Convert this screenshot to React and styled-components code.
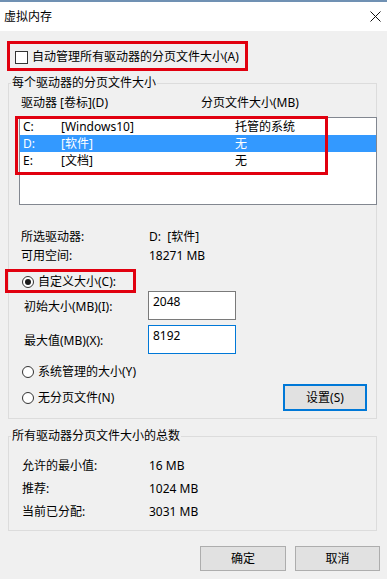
import React from 'react';
import styled, { createGlobalStyle } from 'styled-components';

const GlobalStyle = createGlobalStyle`
  html, body {
    margin: 0;
    padding: 0;
    background: #f0f0f0;
  }
  body {
    font-family: "Noto Sans", "Noto Sans CJK SC", sans-serif;
    font-size: 12px;
    color: #000;
  }
`;

const Window = styled.div`
  width: 387px;
  height: 579px;
  background: #f0f0f0;
  display: flex;
  flex-direction: column;
  overflow: hidden;
`;

const TitleBar = styled.div`
  height: 29px;
  border-top: 2px solid #7091b3;
  background: #fff;
  display: flex;
  align-items: center;
  justify-content: space-between;
  padding: 0 6px 0 4px;
  line-height: 14px;
`;

const Body = styled.div`
  display: flex;
  flex-direction: column;
  padding: 0 10px 0 8px;
`;

const Annotation = styled.div`
  position: absolute;
  top: ${({ $top }) => $top}px;
  left: ${({ $left }) => $left}px;
  width: ${({ $width }) => $width}px;
  height: ${({ $height }) => $height}px;
  border: 3px solid #e1000f;
  box-sizing: border-box;
  pointer-events: none;
`;

const AutoBox = styled.div`
  margin: 10px 0 0 -1px;
  width: 241px;
  height: 30px;
  box-sizing: border-box;
  border: 3px solid #e1000f;
  display: flex;
  align-items: center;
  gap: 4px;
  padding: 2px 0 0 5px;
  line-height: 14px;
`;

const CheckBox = styled.span`
  width: 13px;
  height: 13px;
  box-sizing: border-box;
  border: 1px solid #333;
  background: #fff;
`;

const Group = styled.fieldset`
  margin: ${({ $gap }) => $gap}px 0 0 0;
  padding: 0;
  border: 1px solid #dcdcdc;
  min-width: 0;
`;

const Legend = styled.legend`
  margin-left: 2px;
  padding: 0 1px;
  line-height: 14px;
`;

const GroupInner = styled.div`
  display: flex;
  flex-direction: column;
  padding: ${({ $pad }) => $pad};
`;

const HeaderRow = styled.div`
  display: flex;
  line-height: 14px;
  padding-left: 2px;
`;

const HeaderCell = styled.span`
  width: ${({ $w }) => $w || 'auto'};
`;

const ListWrap = styled.div`
  position: relative;
  margin-top: 7px;
`;

const ListBox = styled.div`
  height: 88px;
  box-sizing: border-box;
  border: 1px solid #828790;
  background: #fff;
  margin-right: -1px;
`;

const ListRow = styled.div`
  display: flex;
  height: 17px;
  line-height: 17px;
  background: ${({ $selected }) => ($selected ? '#3399ff' : 'transparent')};
  color: ${({ $selected }) => ($selected ? '#fff' : '#000')};
`;

const Cell = styled.span`
  width: ${({ $w }) => $w || 'auto'};
  padding-left: ${({ $pl }) => $pl || 0}px;
  box-sizing: border-box;
  white-space: nowrap;
`;

const InfoBlock = styled.div`
  margin-top: 22px;
  display: flex;
  flex-direction: column;
`;

const InfoRow = styled.div`
  display: flex;
  height: ${({ $h }) => $h}px;
  line-height: ${({ $h }) => $h}px;
  padding-left: ${({ $pl }) => $pl}px;
`;

const InfoLabel = styled.span`
  width: ${({ $w }) => $w}px;
`;

const RadioRow = styled.div`
  position: relative;
  display: flex;
  align-items: center;
  gap: 4px;
  height: 16px;
  line-height: 14px;
  padding-left: 3px;
  margin-top: ${({ $mt }) => $mt || 0}px;
`;

const Radio = styled.span`
  width: 12px;
  height: 12px;
  box-sizing: border-box;
  border: 1px solid #333;
  border-radius: 50%;
  background: #fff;
  display: flex;
  align-items: center;
  justify-content: center;
  &::after {
    content: '';
    width: 6px;
    height: 6px;
    border-radius: 50%;
    background: ${({ $checked }) => ($checked ? '#1a1a1a' : 'transparent')};
  }
`;

const FieldRow = styled.div`
  display: flex;
  align-items: center;
  height: 29px;
  margin-top: ${({ $mt }) => $mt}px;
`;

const FieldLabel = styled.span`
  width: 129px;
  padding: 3px 0 0 5px;
  box-sizing: border-box;
  line-height: 14px;
`;

const TextBox = styled.div`
  width: 88px;
  height: 29px;
  box-sizing: border-box;
  border: 1px solid ${({ $focused }) => ($focused ? '#0078d7' : '#7a7a7a')};
  background: #fff;
  padding: 3px 4px 0;
  line-height: 14px;
`;

const BottomRow = styled.div`
  display: flex;
  align-items: center;
  justify-content: space-between;
  margin-top: 4px;
  padding-right: 9px;
`;

const Button = styled.div`
  width: ${({ $w }) => $w}px;
  height: ${({ $h }) => $h}px;
  box-sizing: border-box;
  border: ${({ $default }) => ($default ? '2px solid #0078d7' : '1px solid #adadad')};
  background: #e1e1e1;
  display: flex;
  align-items: center;
  justify-content: center;
  line-height: 14px;
`;

const Footer = styled.div`
  display: flex;
  justify-content: flex-end;
  gap: 9px;
  margin: 15px -3px 0 0;
`;

const CloseIcon = () => (
  <svg width="11" height="11" viewBox="0 0 11 11">
    <path d="M0.5 0.5 L10.5 10.5 M10.5 0.5 L0.5 10.5" stroke="#111" strokeWidth="1" fill="none" />
  </svg>
);

const drives = [
  { drive: 'C:', label: '[Windows10]', size: '托管的系统' },
  { drive: 'D:', label: '[软件]', size: '无', selected: true },
  { drive: 'E:', label: '[文档]', size: '无' },
];

const totals = [
  ['允许的最小值:', '16 MB'],
  ['推荐:', '1024 MB'],
  ['当前已分配:', '3031 MB'],
];

export default function App() {
  return (
    <>
      <GlobalStyle />
      <Window>
        <TitleBar>
          <span>虚拟内存</span>
          <CloseIcon />
        </TitleBar>
        <Body>
          <AutoBox>
            <CheckBox />
            <span>自动管理所有驱动器的分页文件大小(A)</span>
          </AutoBox>

          <Group $gap={5}>
            <Legend>每个驱动器的分页文件大小</Legend>
            <GroupInner $pad="6px 0 7px 10px">
              <HeaderRow>
                <HeaderCell $w="180px">驱动器 [卷标](D)</HeaderCell>
                <HeaderCell>分页文件大小(MB)</HeaderCell>
              </HeaderRow>
              <ListWrap>
                <ListBox>
                  {drives.map((d) => (
                    <ListRow key={d.drive} $selected={d.selected}>
                      <Cell $w="41px" $pl={3}>{d.drive}</Cell>
                      <Cell $w="174px">{d.label}</Cell>
                      <Cell>{d.size}</Cell>
                    </ListRow>
                  ))}
                </ListBox>
                <Annotation $top={-1} $left={-4} $width={313} $height={59} />
              </ListWrap>

              <InfoBlock>
                <InfoRow $h={19} $pl={2}>
                  <InfoLabel $w={128}>所选驱动器:</InfoLabel>
                  <span>D:&nbsp;&nbsp;[软件]</span>
                </InfoRow>
                <InfoRow $h={19} $pl={2}>
                  <InfoLabel $w={128}>可用空间:</InfoLabel>
                  <span>18271 MB</span>
                </InfoRow>
              </InfoBlock>

              <RadioRow $mt={9}>
                <Radio $checked />
                <span>自定义大小(C):</span>
                <Annotation $top={-5} $left={-14} $width={131} $height={24} />
              </RadioRow>
              <FieldRow $mt={1}>
                <FieldLabel>初始大小(MB)(I):</FieldLabel>
                <TextBox>2048</TextBox>
              </FieldRow>
              <FieldRow $mt={5}>
                <FieldLabel>最大值(MB)(X):</FieldLabel>
                <TextBox $focused>8192</TextBox>
              </FieldRow>
              <RadioRow $mt={10}>
                <Radio />
                <span>系统管理的大小(Y)</span>
              </RadioRow>
              <BottomRow>
                <RadioRow>
                  <Radio />
                  <span>无分页文件(N)</span>
                </RadioRow>
                <Button $w={84} $h={27} $default>设置(S)</Button>
              </BottomRow>
            </GroupInner>
          </Group>

          <Group $gap={10}>
            <Legend>所有驱动器分页文件大小的总数</Legend>
            <GroupInner $pad="11px 0 7px 0">
              {totals.map(([label, value]) => (
                <InfoRow key={label} $h={23} $pl={13}>
                  <InfoLabel $w={127}>{label}</InfoLabel>
                  <span>{value}</span>
                </InfoRow>
              ))}
            </GroupInner>
          </Group>

          <Footer>
            <Button $w={86} $h={25}>确定</Button>
            <Button $w={85} $h={25}>取消</Button>
          </Footer>
        </Body>
      </Window>
    </>
  );
}
